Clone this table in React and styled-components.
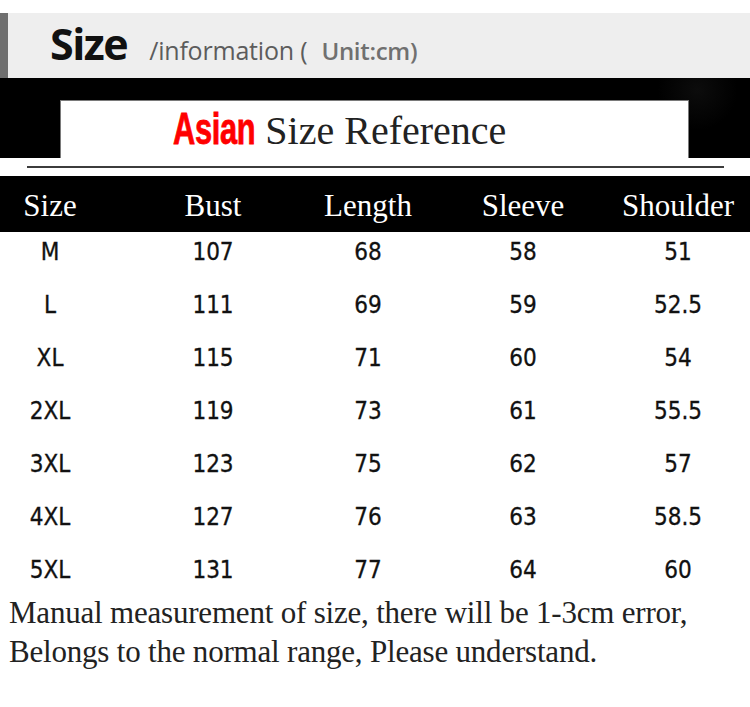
import React from 'react';
import styled, { createGlobalStyle } from 'styled-components';

const GlobalStyle = createGlobalStyle`
  body {
    margin: 0;
    background: #ffffff;
  }
`;

const rows = [
  ['M', '107', '68', '58', '51'],
  ['L', '111', '69', '59', '52.5'],
  ['XL', '115', '71', '60', '54'],
  ['2XL', '119', '73', '61', '55.5'],
  ['3XL', '123', '75', '62', '57'],
  ['4XL', '127', '76', '63', '58.5'],
  ['5XL', '131', '77', '64', '60'],
];

const headers = ['Size', 'Bust', 'Length', 'Sleeve', 'Shoulder'];

const App = () => {
  return (
    <>
      <GlobalStyle />
      <Page>
        <TitleBar>
          <BigTitle>Size</BigTitle>
          <SubTitle>/information (</SubTitle>
          <Unit>Unit:cm)</Unit>
        </TitleBar>

        <Banner>
          <BannerBox>
            <Red>Asian</Red>
            <BannerText>Size Reference</BannerText>
          </BannerBox>
        </Banner>

        <RuleStrip>
          <Rule />
        </RuleStrip>

        <HeadRow>
          {headers.map((h) => (
            <Cell key={h}>{h}</Cell>
          ))}
        </HeadRow>

        {rows.map((r) => (
          <DataRow key={r[0]}>
            {r.map((v, i) => (
              <Cell key={i}>{v}</Cell>
            ))}
          </DataRow>
        ))}

        <Note>
          Manual measurement of size, there will be 1-3cm error,
          <br />
          Belongs to the normal range, Please understand.
        </Note>
      </Page>
    </>
  );
};

const Page = styled.div`
  width: 750px;
  height: 707px;
  background: #ffffff;
  padding-top: 13px;
  box-sizing: border-box;
  overflow: hidden;
`;

const TitleBar = styled.div`
  height: 65px;
  box-sizing: border-box;
  background: #eeeeee;
  border-left: 8px solid #6f6f6f;
  display: flex;
  align-items: baseline;
  padding: 9px 0 0 42px;
  line-height: 1;
  font-family: 'Open Sans', 'Liberation Sans', sans-serif;
`;

const BigTitle = styled.span`
  font-size: 43px;
  font-weight: 700;
  color: #111111;
  letter-spacing: -1.5px;
  margin-right: 22px;
`;

const SubTitle = styled.span`
  font-size: 25px;
  color: #5c5c5c;
  margin-right: 14px;
  letter-spacing: -0.2px;
`;

const Unit = styled.span`
  font-size: 24px;
  font-weight: 600;
  color: #707070;
  letter-spacing: -0.3px;
`;

const Banner = styled.div`
  height: 80px;
  box-sizing: border-box;
  background: radial-gradient(ellipse 40px 40px at 93% 15%, #0c0c0c, #000000 100%);
  padding: 22px 61px 0 60px;
  display: flex;
`;

const BannerBox = styled.div`
  flex: 1;
  background: #ffffff;
  border: 1px solid #7a7a7a;
  border-bottom: none;
  display: flex;
  align-items: baseline;
  padding: 6px 0 0 112px;
  line-height: 1;
`;

const Red = styled.span`
  display: inline-block;
  font-family: 'Liberation Sans', Arial, sans-serif;
  font-weight: 700;
  font-size: 44px;
  color: #ff0000;
  transform: scaleX(0.7);
  transform-origin: left center;
  margin-right: -25px;
  letter-spacing: -0.5px;
  -webkit-text-stroke: 0.8px #ff0000;
`;

const BannerText = styled.span`
  font-family: 'Liberation Serif', 'Times New Roman', serif;
  font-size: 40px;
  color: #222222;
`;

const RuleStrip = styled.div`
  height: 18px;
  box-sizing: border-box;
  padding: 8px 26px 0 27px;
`;

const Rule = styled.div`
  height: 2px;
  background: #3c3c3c;
`;

const Grid = styled.div`
  display: grid;
  grid-template-columns: 100px 226px 84px 226px 84px;
`;

const Cell = styled.div`
  display: flex;
  justify-content: center;
  white-space: nowrap;
`;

const HeadRow = styled(Grid)`
  height: 56px;
  box-sizing: border-box;
  background: #000000;
  color: #ffffff;
  padding-top: 4px;
  font-family: 'Liberation Serif', 'Times New Roman', serif;
  font-size: 31px;
  line-height: 52px;
`;

const DataRow = styled(Grid)`
  height: 53px;
  box-sizing: border-box;
  padding-top: 7px;
  color: #111111;
  font-family: 'DejaVu Sans Condensed', 'DejaVu Sans', sans-serif;
  font-stretch: condensed;
  font-size: 24px;
  line-height: 26px;
  -webkit-text-stroke: 0.3px #111111;
`;

const Note = styled.div`
  margin-top: -10px;
  padding-left: 9px;
  font-family: 'Liberation Serif', 'Times New Roman', serif;
  font-size: 31px;
  line-height: 39px;
  color: #222222;
  letter-spacing: -0.2px;
`;

export default App;
